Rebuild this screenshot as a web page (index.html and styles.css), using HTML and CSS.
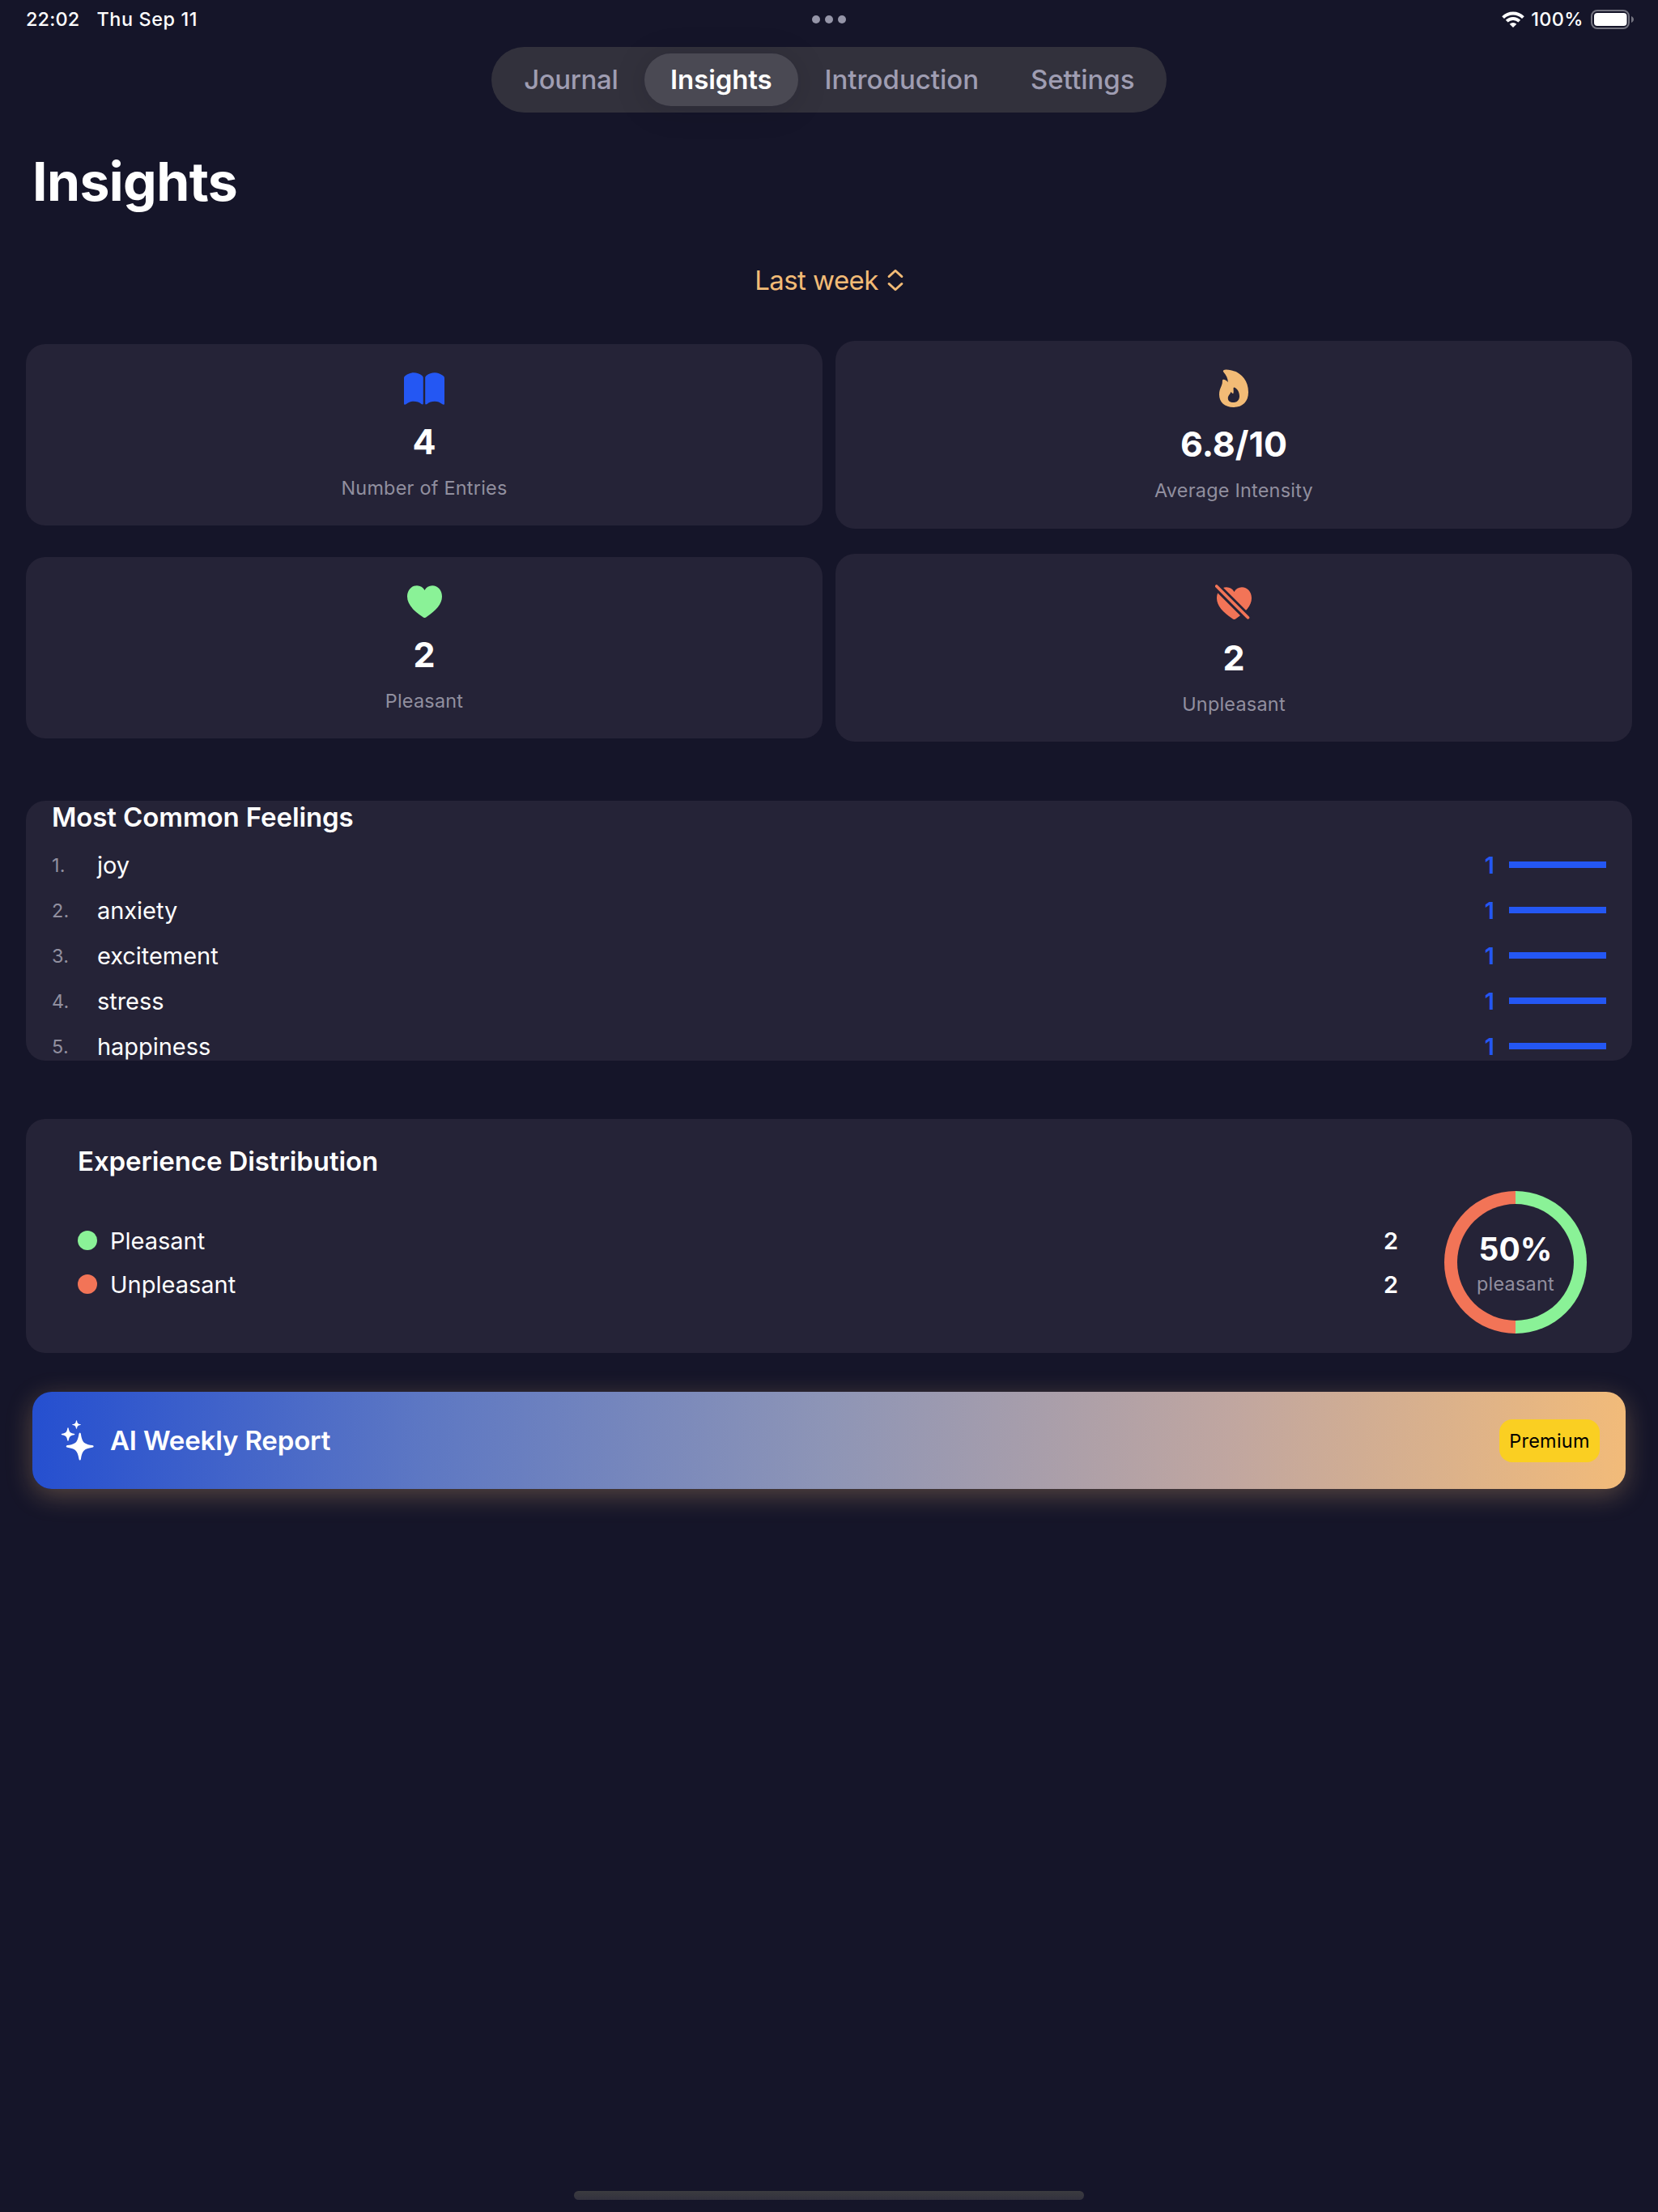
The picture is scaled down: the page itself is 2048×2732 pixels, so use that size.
FILE: index.html
```html
<!DOCTYPE html>
<html lang="en">
<head>
<meta charset="utf-8">
<title>Insights</title>
<link rel="stylesheet" href="styles.css">
</head>
<body>
<div class="screen">
  <div class="status">
    <div class="status-left"><span class="time">22:02</span><span class="date">Thu Sep 11</span></div>
    <div class="dots"><i></i><i></i><i></i></div>
    <div class="status-right">
      <svg class="wifi" width="28" height="20" viewBox="0 0 28 20">
        <g fill="none" stroke="#fff" stroke-width="3.9">
          <path d="M1.6 7.6 A17.6 17.6 0 0 1 26.4 7.6"/>
          <path d="M6.2 12.2 A11 11 0 0 1 21.8 12.2"/>
        </g>
        <path fill="#fff" d="M14 20 L9.7 15.7 A6.1 6.1 0 0 1 18.3 15.7 Z"/>
      </svg>
      <span class="percent">100%</span>
      <svg class="battery" width="54" height="24" viewBox="0 0 54 24">
        <rect x="1" y="1" width="46" height="22" rx="7" fill="none" stroke="#73737f" stroke-width="2"/>
        <rect x="4" y="4" width="40.5" height="16" rx="4" fill="#fff"/>
        <path d="M50 8 C54 9.5 54 14.5 50 16 Z" fill="#73737f"/>
      </svg>
    </div>
  </div>

  <nav class="tabs">
    <a class="tab tab-journal">Journal</a>
    <a class="tab tab-active">Insights</a>
    <a class="tab tab-intro">Introduction</a>
    <a class="tab tab-settings">Settings</a>
  </nav>

  <h1 class="title">Insights</h1>

  <div class="period">
    <span>Last week</span>
    <svg width="20" height="28" viewBox="0 0 20 28" fill="none" stroke="#f2bb76" stroke-width="2.8" stroke-linecap="round" stroke-linejoin="round">
      <path d="M2 9.6 L10 2.2 L18 9.6"/><path d="M2 18.4 L10 25.8 L18 18.4"/>
    </svg>
  </div>

  <section class="stats">
    <div class="card stat">
      <svg class="stat-icon" width="50" height="40" viewBox="0 0 50 40" fill="#2457f3">
        <path d="M0 7.2 C0 5.8 .5 5 1.7 4.1 C4.8 1.6 8.6 .2 12 .2 C15.800 .2 19.400 1.400 22.200 3.800 C23.400 4.800 23.800 5.600 23.800 7 V38 C23.800 39.600 22.600 39.900 21.500 39 C19 37 15.800 35.800 12 35.800 C8.500 35.800 5.500 37 2.900 39.100 C1.300 40.400 0 39.900 0 38.500 Z"/>
        <path d="M50 7.200 C50 5.800 49.500 5 48.300 4.100 C45.200 1.600 41.400 .2 38 .2 C34.200 .2 30.600 1.400 27.800 3.800 C26.600 4.800 26.200 5.600 26.200 7 V38 C26.200 39.600 27.400 39.900 28.500 39 C31 37 34.200 35.800 38 35.800 C41.500 35.800 44.500 37 47.100 39.100 C48.700 40.400 50 39.900 50 38.500 Z"/>
      </svg>
      <div class="stat-value">4</div>
      <div class="stat-label">Number of Entries</div>
    </div>
    <div class="card stat stat-tall">
      <svg class="stat-icon" width="36" height="47" viewBox="0 0 36 47">
        <path fill="#f2bb76" fill-rule="evenodd" d="M8.600 .4 C22 .6 36 10.300 36 28.300 C36 40.300 28.800 47 17.600 47 C6.800 47 0 40.800 0 31.300 C0 23.300 4 21.300 3.900 14.800 C3.800 12.600 4.900 12.400 6.700 13.100 C8.300 13.700 9.700 14.800 10.900 16.200 C10.700 11.100 8.800 7.400 5.300 3.400 C4 2 5.500 .3 8.600 .4 Z M17.700 23 C17.200 24.800 18.300 28 17.200 30.200 C15.900 30.300 15.400 28.800 14.300 28.100 C14 30.600 10.800 32.600 10.800 35.800 C10.800 39.100 13.300 41.100 17.500 41.100 C22 41.100 25 38.100 25 33.300 C25 27.800 22 23.600 18.700 22.500 C18.100 22.300 17.800 22.500 17.700 23 Z"/>
      </svg>
      <div class="stat-value">6.8/10</div>
      <div class="stat-label">Average Intensity</div>
    </div>
    <div class="card stat">
      <svg class="stat-icon" width="43" height="40" viewBox="0 0 43 40">
        <path fill="#8af297" d="M21.500 40 C20.900 40 20 39.400 19.200 38.900 C7.500 31.200 0 23 0 13.700 C0 5.800 5.200 .3 12 .3 C16.200 .3 19.500 2.500 21.500 6 C23.500 2.500 26.800 .3 31 .3 C37.800 .3 43 5.800 43 13.700 C43 23 35.500 31.200 23.800 38.900 C23 39.400 22.100 40 21.500 40 Z"/>
      </svg>
      <div class="stat-value">2</div>
      <div class="stat-label">Pleasant</div>
    </div>
    <div class="card stat stat-tall">
      <svg class="stat-icon" width="46" height="48" viewBox="0 0 46 48">
        <path fill="#f27457" d="M23.500 46 C22.900 46 22 45.400 21.200 44.900 C9.500 37.200 2 29 2 19.700 C2 11.800 7.200 6.300 14 6.300 C18.200 6.300 21.500 8.500 23.500 12 C25.500 8.500 28.800 6.300 33 6.300 C39.800 6.300 45 11.800 45 19.700 C45 29 37.500 37.200 25.800 44.900 C25 45.400 24.100 46 23.500 46 Z"/>
        <path d="M-2 1.500 L43.500 47" stroke="#252337" stroke-width="9.400"/>
        <path d="M1.700 5 L40.500 43.800" stroke="#f27457" stroke-width="3.700" stroke-linecap="round"/>
      </svg>
      <div class="stat-value">2</div>
      <div class="stat-label">Unpleasant</div>
    </div>
  </section>

  <section class="card feelings">
    <h2>Most Common Feelings</h2>
    <ol class="feeling-list">
      <li><span class="rank">1.</span><span class="name">joy</span><span class="count">1</span><span class="bar"></span></li>
      <li><span class="rank">2.</span><span class="name">anxiety</span><span class="count">1</span><span class="bar"></span></li>
      <li><span class="rank">3.</span><span class="name">excitement</span><span class="count">1</span><span class="bar"></span></li>
      <li><span class="rank">4.</span><span class="name">stress</span><span class="count">1</span><span class="bar"></span></li>
      <li><span class="rank">5.</span><span class="name">happiness</span><span class="count">1</span><span class="bar"></span></li>
    </ol>
  </section>

  <section class="card distribution">
    <h2>Experience Distribution</h2>
    <div class="dist-body">
      <div class="legend">
        <div class="legend-row"><i class="dot green"></i><span>Pleasant</span><b>2</b></div>
        <div class="legend-row"><i class="dot red"></i><span>Unpleasant</span><b>2</b></div>
      </div>
      <div class="ring"><div class="ring-hole"><strong>50%</strong><small>pleasant</small></div></div>
    </div>
  </section>

  <section class="banner">
    <svg width="42" height="52" viewBox="0 0 42 52" fill="#fff">
      <path d="M23.700 16.500 Q24.700 16.500 24.900 18 C26.500 28.500 28.500 30.500 39 32.100 Q40.700 32.400 40.700 33.500 Q40.700 34.500 39 34.700 C28.500 36.500 26.500 38.500 24.900 49 Q24.700 50.500 23.700 50.500 Q22.700 50.500 22.500 49 C20.700 38.500 18.700 36.500 8.300 34.700 Q6.700 34.500 6.700 33.500 Q6.700 32.400 8.300 32.100 C18.700 30.500 20.700 28.500 22.500 18 Q22.700 16.500 23.700 16.500 Z"/>
      <path d="M9 10.300 Q9.600 10.300 9.700 11 C10.600 15.800 11.700 17 16.500 17.700 Q17.300 17.900 17.300 18.500 Q17.300 19.100 16.500 19.200 C11.700 20 10.600 21.200 9.700 26 Q9.600 26.700 9 26.700 Q8.400 26.700 8.300 26 C7.500 21.200 6.300 20 1.600 19.200 Q.8 19.100 .8 18.500 Q.8 17.900 1.600 17.700 C6.300 17 7.500 15.800 8.300 11 Q8.400 10.300 9 10.300 Z"/>
      <path d="M19.500 1.300 Q20 1.300 20.100 1.900 C20.600 4.800 21.300 5.500 24.200 6 Q24.800 6.100 24.800 6.500 Q24.800 6.900 24.200 7 C21.300 7.500 20.600 8.200 20.100 11.100 Q20 11.700 19.500 11.700 Q19 11.700 18.900 11.100 C18.400 8.200 17.700 7.500 14.800 7 Q14.200 6.900 14.200 6.500 Q14.200 6.100 14.800 6 C17.700 5.500 18.400 4.800 18.900 1.900 Q19 1.300 19.500 1.300 Z"/>
    </svg>
    <span class="banner-title">AI Weekly Report</span>
    <span class="premium">Premium</span>
  </section>

  <div class="home-bar"></div>
</div>
</body>
</html>
```
FILE: styles.css
```css
* { box-sizing: border-box; margin: 0; padding: 0; }

body {
  background: #151529;
  color: #fff;
  font-family: Inter, "Liberation Sans", sans-serif;
}

.screen {
  width: 2048px;
  height: 2732px;
  display: flex;
  flex-direction: column;
  padding-bottom: 15px;
  overflow: hidden;
}

/* Status bar */
.status {
  height: 48px;
  padding: 0 32px;
  display: grid;
  grid-template-columns: 1fr auto 1fr;
  align-items: center;
  font-size: 23.4px;
  font-weight: 500;
  line-height: 48px;
}
.status-left { display: flex; gap: 21px; }
.time { letter-spacing: .2px; }
.date { letter-spacing: .6px; }
.dots { display: flex; gap: 6px; }
.dots i { width: 10px; height: 10px; border-radius: 50%; background: #9595a8; }
.status-right { display: flex; align-items: center; justify-content: flex-end; margin-right: -3px; }
.percent { margin: 0 9px 0 8px; letter-spacing: .4px; }

/* Tabs */
.tabs {
  width: 834px;
  height: 81px;
  margin: 10px auto 0;
  padding: 8px;
  display: flex;
  border-radius: 41px;
  background: #32313c;
  font-size: 33px;
  font-weight: 500;
  line-height: 65px;
  color: #9f9db2;
}
.tab { text-align: center; white-space: nowrap; }
.tab-journal { width: 181px; letter-spacing: -.4px; }
.tab-active {
  width: 191px;
  border-radius: 33px;
  background: #4a4953;
  color: #fff;
  font-weight: 600;
  letter-spacing: -.1px;
  box-shadow: 0 4px 40px rgba(10, 10, 20, .14);
}
.tab-intro { width: 256px; }
.tab-settings { width: 192px; }

.title {
  margin: 45px 0 0 40px;
  font-size: 66px;
  font-weight: 700;
  line-height: 80px;
  letter-spacing: -.6px;
}

.period {
  height: 42px;
  margin-top: 61px;
  display: flex;
  justify-content: center;
  align-items: center;
  gap: 11px;
  font-size: 33px;
  line-height: 42px;
  letter-spacing: -.55px;
  color: #f2bb76;
}

/* Cards */
.card { border-radius: 24px; background: #252337; }

.stats {
  margin: 54px 32px 0;
  display: grid;
  grid-template-columns: 1fr 1fr;
  grid-auto-rows: 232px;
  gap: 31px 16px;
}
.stat {
  height: 224px;
  margin-top: 4px;
  padding-top: 35px;
  display: flex;
  flex-direction: column;
  align-items: center;
}
.stat-tall { height: 232px; margin-top: 0; }
.stat-icon { flex: none; }
.stat-value {
  margin-top: 19px;
  font-size: 43px;
  font-weight: 700;
  line-height: 52px;
}
.stat-label {
  margin-top: 17px;
  font-size: 23.4px;
  line-height: 30px;
  letter-spacing: .25px;
  color: #918f9f;
}

h2 { font-size: 33px; font-weight: 600; line-height: 40px; letter-spacing: -.1px; }

.feelings { height: 321px; margin: 73px 32px 0; padding: 0 32px; }
.feeling-list { list-style: none; margin-top: 21px; display: grid; gap: 20px; }
.feeling-list li { height: 36px; display: flex; align-items: center; line-height: 36px; }
.rank { width: 56px; padding-top: 2px; font-size: 23.4px; letter-spacing: .3px; color: #918f9f; }
.name { flex: 1; padding-top: 2px; font-size: 29px; letter-spacing: -.05px; }
.count { margin-right: 18px; padding-top: 2px; font-size: 29px; font-weight: 600; color: #2457f3; }
.bar { width: 120px; height: 8px; background: #2457f3; }

.distribution { height: 289px; margin: 72px 32px 0; padding: 32px 56px 0 64px; }
.dist-body { margin-top: 17px; display: flex; align-items: center; gap: 57px; }
.legend { flex: 1; display: grid; gap: 24px; }
.legend-row { height: 30px; display: flex; align-items: center; font-size: 29px; line-height: 30px; }
.dot { width: 24px; height: 24px; margin-right: 16px; border-radius: 50%; }
.green { background: #8af297; }
.red { background: #f27457; }
.legend-row span { flex: 1; padding-top: 2px; }
.legend-row b { padding-top: 2px; font-weight: 600; }
.ring {
  width: 176px;
  height: 176px;
  padding: 16px;
  border-radius: 50%;
  background: linear-gradient(90deg, #f27457 50%, #8af297 50%);
}
.ring-hole {
  height: 144px;
  border-radius: 50%;
  background: #252337;
  display: flex;
  flex-direction: column;
  align-items: center;
  padding-top: 34px;
}
.ring-hole strong { font-size: 39px; font-weight: 700; line-height: 44px; }
.ring-hole small { font-size: 23.4px; line-height: 30px; margin-top: 6px; letter-spacing: .25px; color: #918f9f; }

.banner {
  height: 120px;
  margin: 48px 40px 0;
  padding: 0 32px 0 35px;
  display: flex;
  align-items: center;
  border-radius: 24px;
  background: linear-gradient(93.500deg, #254fd0 0%, #5e78c3 25%, #8e95b6 50%, #c0a6a0 75%, #f2bb79 100%);
  box-shadow: 0 8px 32px rgba(242, 187, 118, .3);
}
.banner-title { margin-left: 19px; flex: 1; font-size: 33px; font-weight: 600; letter-spacing: -.15px; }
.premium {
  width: 124px;
  height: 53px;
  border-radius: 16px;
  background: #facf22;
  color: #000;
  font-size: 23.4px;
  line-height: 53px;
  letter-spacing: .3px;
  text-align: center;
}

.home-bar {
  width: 630px;
  height: 11px;
  margin: auto auto 0;
  border-radius: 6px;
  background: linear-gradient(#3b3b3f, #33323e);
}
```
